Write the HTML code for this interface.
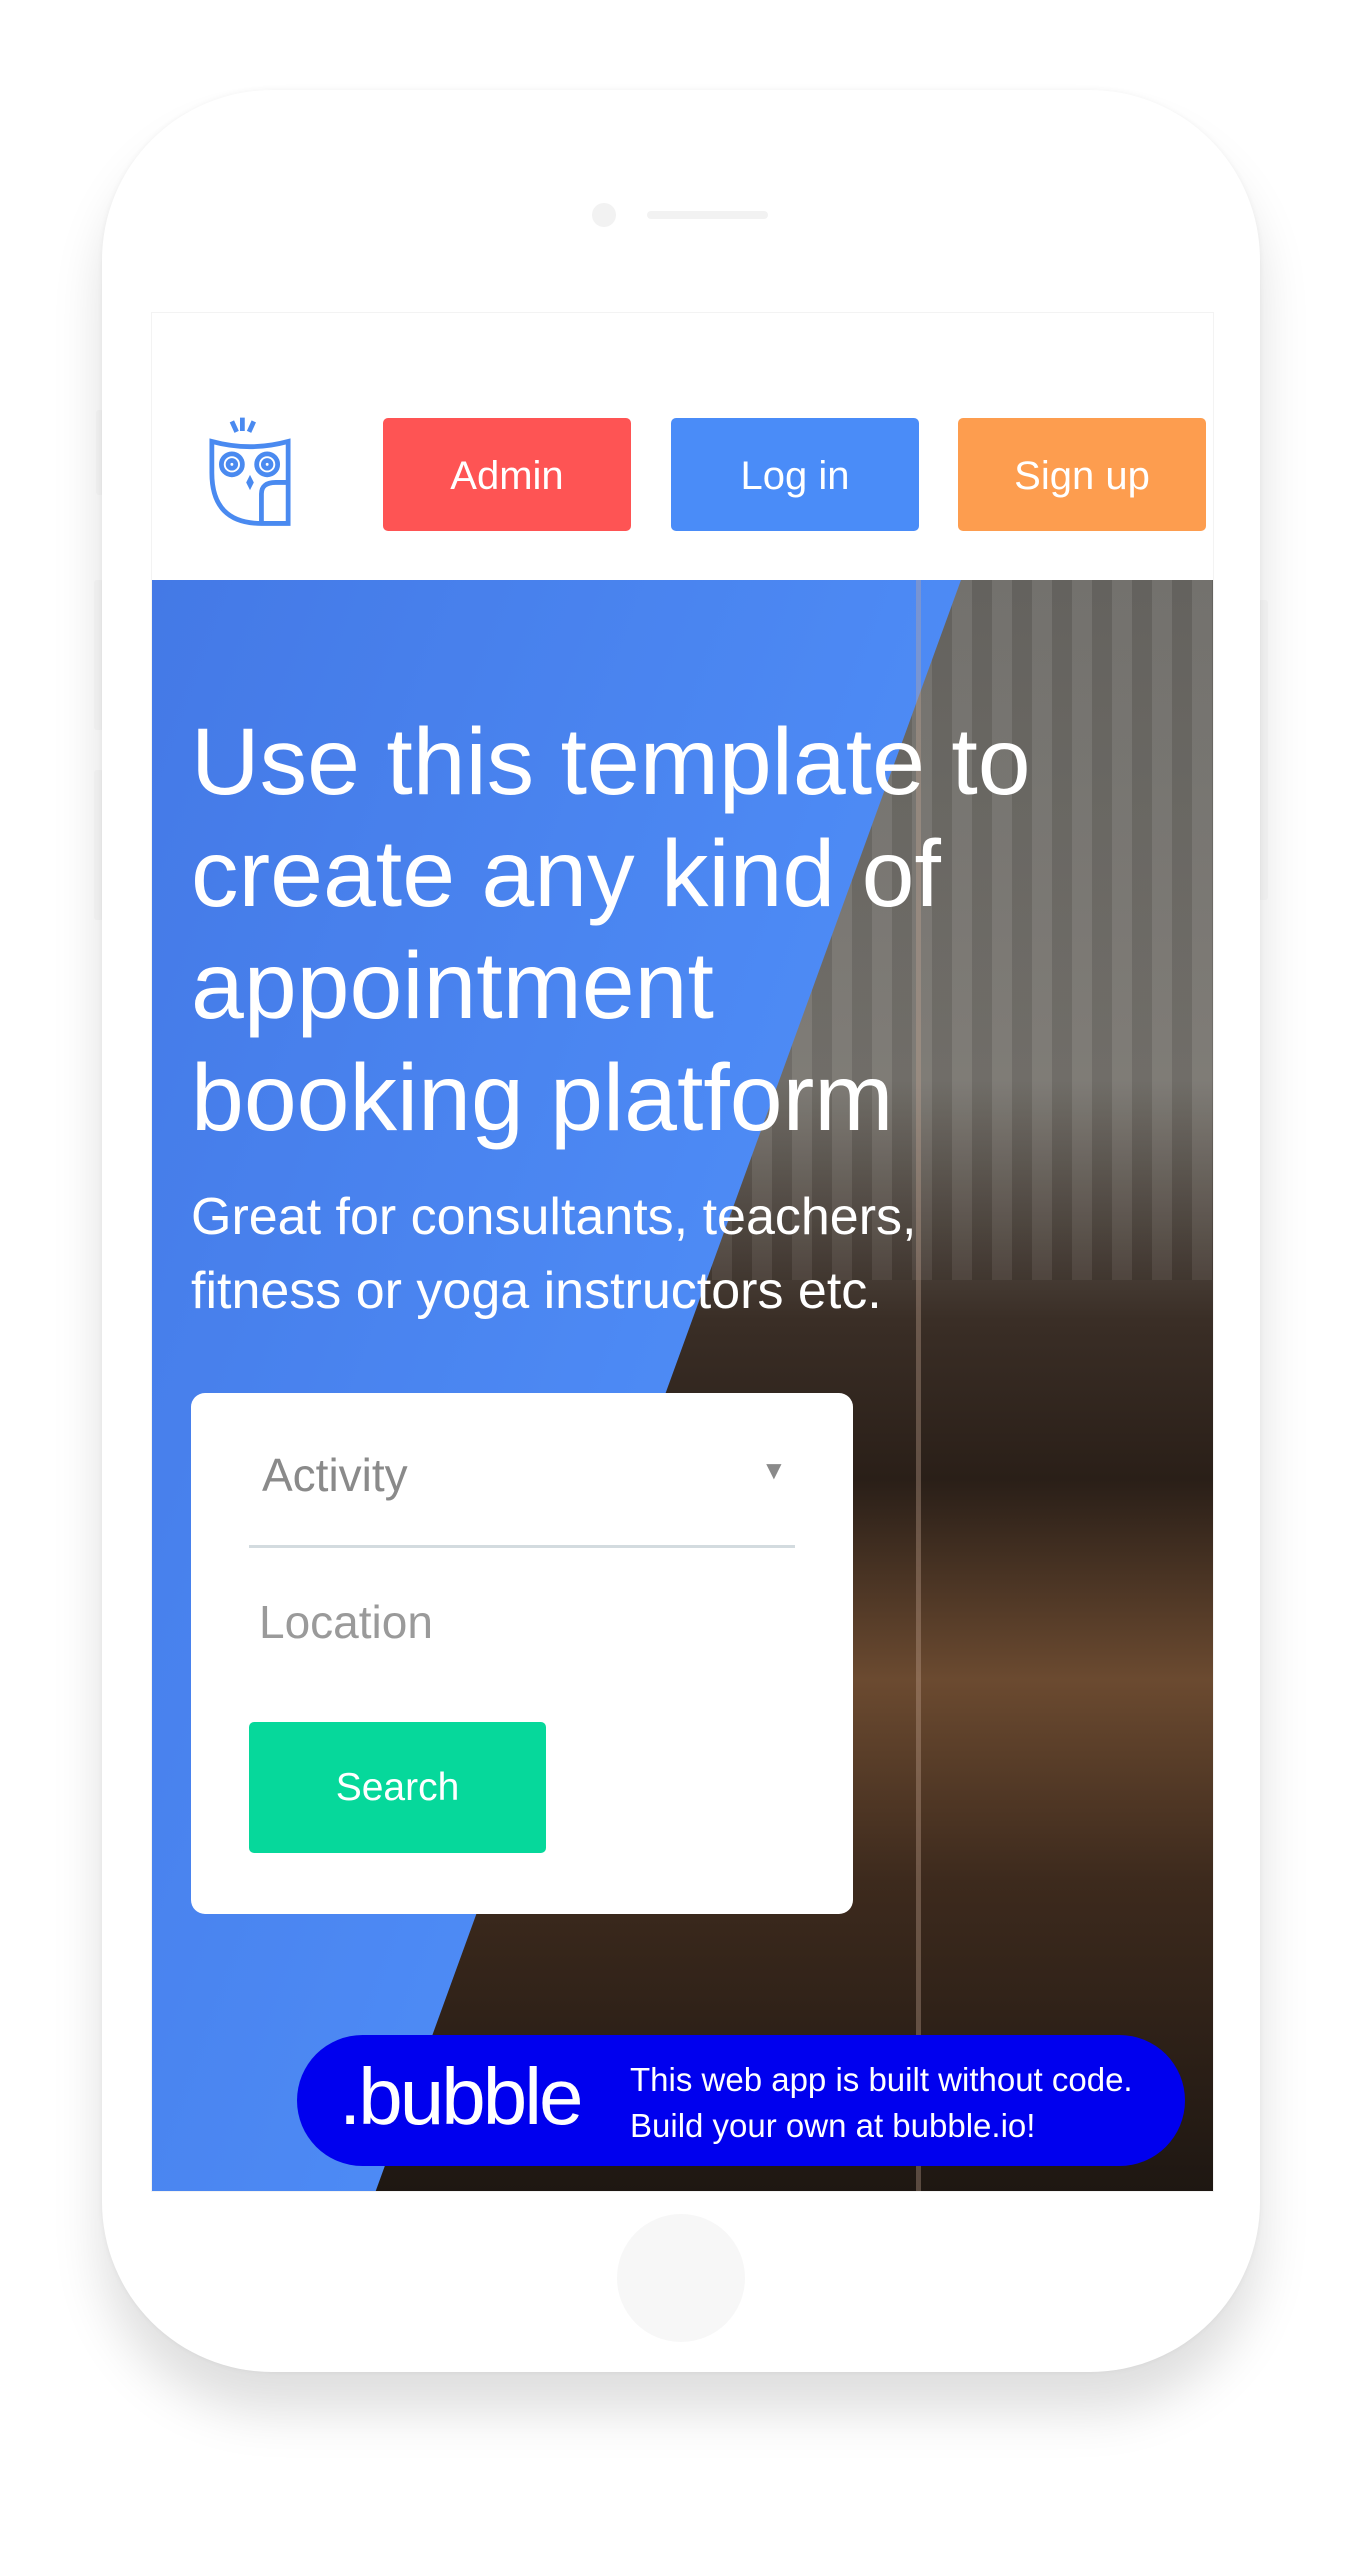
<!DOCTYPE html>
<html><head><meta charset="utf-8"><style>
*{margin:0;padding:0;box-sizing:border-box}
body{width:1362px;height:2574px;background:#fff;position:relative;overflow:hidden;font-family:"Liberation Sans",sans-serif}
.phone{position:absolute;left:102px;top:90px;width:1158px;height:2282px;background:#fff;border-radius:170px;box-shadow:0 40px 50px rgba(0,0,0,.13),0 0 6px rgba(0,0,0,.05)}
.side{position:absolute;background:#fafafa;border-radius:3px}
.screen{position:absolute;left:151px;top:312px;width:1063px;height:1880px;background:#fff;border:1px solid #f3f3f3;overflow:hidden}
.btn{position:absolute;top:105px;width:248px;height:113px;border-radius:5px;color:#fff;font-size:40px;display:flex;align-items:center;justify-content:center;padding-top:4px}
.hero{position:absolute;left:0;top:267px;width:1063px;height:1613px;background:linear-gradient(110deg,#4479e6,#4f8ef8 60%)}
.photo{position:absolute;left:0;top:0;width:100%;height:100%;clip-path:polygon(809px 0,1063px 0,1063px 1613px,223px 1613px);
background:
repeating-linear-gradient(90deg,rgba(255,255,255,.06) 0 20px,rgba(0,0,0,.06) 20px 40px) 0 0/100% 700px no-repeat,
linear-gradient(180deg,#6a6864 0,#77746e 500px,#3a2e26 740px,#2a1f18 900px,#6b4a30 1100px,#3d2a1d 1300px,#1e1712 1613px)}
h1{position:absolute;left:39px;top:126px;color:#fff;font-weight:normal;font-size:95px;line-height:112px;letter-spacing:0px;white-space:nowrap}
.sub{position:absolute;left:39px;top:600px;color:#fff;font-size:52px;line-height:74px;white-space:nowrap}
.card{position:absolute;left:39px;top:813px;width:662px;height:521px;background:#fff;border-radius:14px}
.banner{position:absolute;left:297px;top:2035px;width:888px;height:131px;background:#0000ee;border-radius:66px;color:#fff}
</style></head><body>
<div class="side" style="left:96px;top:410px;width:8px;height:85px"></div>
<div class="side" style="left:94px;top:580px;width:10px;height:150px"></div>
<div class="side" style="left:94px;top:770px;width:10px;height:150px"></div>
<div class="side" style="left:1258px;top:600px;width:10px;height:300px"></div>
<div class="phone">
 <div style="position:absolute;left:490px;top:113px;width:24px;height:24px;border-radius:50%;background:#f2f2f2"></div>
 <div style="position:absolute;left:545px;top:121px;width:121px;height:8px;border-radius:4px;background:#f2f2f2"></div>
 <div style="position:absolute;left:515px;top:2124px;width:128px;height:128px;border-radius:50%;background:#f7f7f7"></div>
</div>
<div class="screen">
 <svg style="position:absolute;left:57px;top:100px" width="82" height="116" viewBox="0 0 86 116" fill="none" stroke="#4a8af0" stroke-width="5">
  <path d="M35 2v14M24 6l5 11M47 6l-5 11"/>
  <path d="M3 27 Q43 38 83 27 V113 H55 Q3 113 3 60 Z"/>
  <path d="M55 113 V82 Q55 70 70 70 H83"/>
  <circle cx="24" cy="51" r="11"/><circle cx="24" cy="51" r="4"/>
  <circle cx="61" cy="51" r="11"/><circle cx="61" cy="51" r="4"/>
  <path d="M43 62 l4 8 -4 8 -4 -8 Z" fill="#4a8af0" stroke="none"/>
 </svg>
 <div class="btn" style="left:231px;background:#fe5454">Admin</div>
 <div class="btn" style="left:519px;background:#4a8cf8">Log in</div>
 <div class="btn" style="left:806px;background:#fd9d4f">Sign up</div>
 <div class="hero">
  <div class="photo"></div>
  <div style="position:absolute;left:764px;top:0;width:5px;height:1613px;background:rgba(200,170,150,.35)"></div>
  <h1>Use this template to<br>create any kind of<br>appointment<br>booking platform</h1>
  <div class="sub">Great for consultants, teachers,<br>fitness or yoga instructors etc.</div>
  <div class="card">
   <div style="position:absolute;left:71px;top:55px;font-size:46px;color:#8a8a8a">Activity</div>
   <div style="position:absolute;left:570px;top:62px;font-size:26px;color:#8a8a8a">▼</div>
   <div style="position:absolute;left:58px;top:152px;width:546px;height:3px;background:#d3dbdf"></div>
   <div style="position:absolute;left:68px;top:202px;font-size:46px;color:#9a9a9a">Location</div>
   <div style="position:absolute;left:58px;top:329px;width:297px;height:131px;background:#06d89b;border-radius:5px;color:#fff;font-size:39px;display:flex;align-items:center;justify-content:center">Search</div>
  </div>
 </div>
</div>
<div class="banner">
 <div style="position:absolute;left:42px;top:16px;font-size:80px;font-weight:normal;letter-spacing:-3px">.bubble</div>
 <div style="position:absolute;left:333px;top:22px;font-size:33px;line-height:46px;white-space:nowrap">This web app is built without code.<br>Build your own at bubble.io!</div>
</div>
</body></html>
